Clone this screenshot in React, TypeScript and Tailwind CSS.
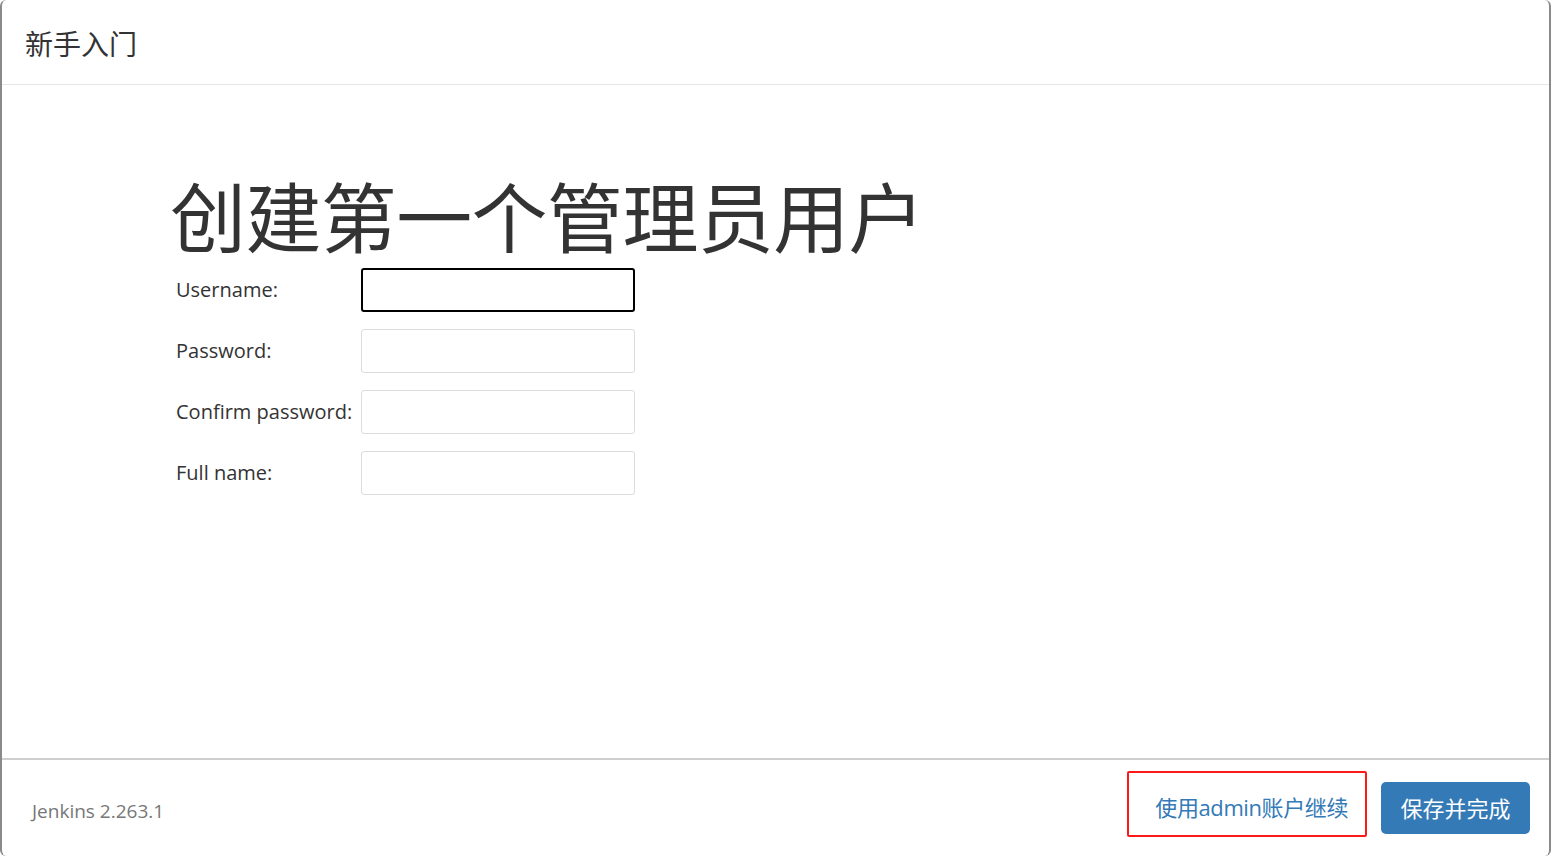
const fields = [
    { label: "Username:", focused: true },
    { label: "Password:", focused: false },
    { label: "Confirm password:", focused: false },
    { label: "Full name:", focused: false },
];

const font = {
    fontFamily:
        '"Open Sans", "Noto Sans CJK SC", sans-serif',
};

export default function App() {
    return (
        <div
            className="flex h-[856px] w-[1551px] flex-col overflow-hidden rounded-md border-x-2 border-[#8a8a8a] bg-white text-[#333]"
            style={font}
        >
            {/* header */}
            <div className="flex h-[85px] shrink-0 items-center border-b border-[#e5e5e5] px-[23px] pt-[4px]">
                <h4 className="text-[28px] leading-none text-[#333]">新手入门</h4>
            </div>

            {/* body */}
            <div className="flex-1 pl-[168px] pt-[95px]">
                <h1 className="text-[76px] leading-none tracking-[-0.6px] text-[#333]">
                    创建第一个管理员用户
                </h1>
                <div className="mt-[12px] flex flex-col gap-[17px] pl-[6px]">
                    {fields.map((f) => (
                        <div key={f.label} className="flex items-center">
                            <label className="w-[185px] shrink-0 text-[20px] text-[#333]">
                                {f.label}
                            </label>
                            <input
                                type="text"
                                className={`h-[44px] w-[274px] rounded-[3px] bg-white outline-none ${
                                    f.focused
                                        ? "border-2 border-black"
                                        : "border border-[#dcdcdc]"
                                }`}
                            />
                        </div>
                    ))}
                </div>
            </div>

            {/* footer */}
            <div className="flex h-[98px] shrink-0 items-center justify-between border-t-2 border-[#cfcfcf] pl-[30px] pr-[19px]">
                <span className="mt-[6px] text-[19px] text-[#777]">Jenkins 2.263.1</span>
                <div className="flex items-center gap-[14px]">
                    <div className="mb-[8px] flex h-[66px] w-[240px] items-center justify-end rounded-[2px] border-2 border-[#ff1a1a] pr-[17px] pt-[6px]">
                        <a className="text-[22px] tracking-[-0.4px] text-[#337ab7]" href="#">
                            使用admin账户继续
                        </a>
                    </div>
                    <button className="flex h-[52px] w-[149px] items-center justify-center rounded-[5px] bg-[#337ab7] text-[22px] text-white">
                        保存并完成
                    </button>
                </div>
            </div>
        </div>
    );
}
